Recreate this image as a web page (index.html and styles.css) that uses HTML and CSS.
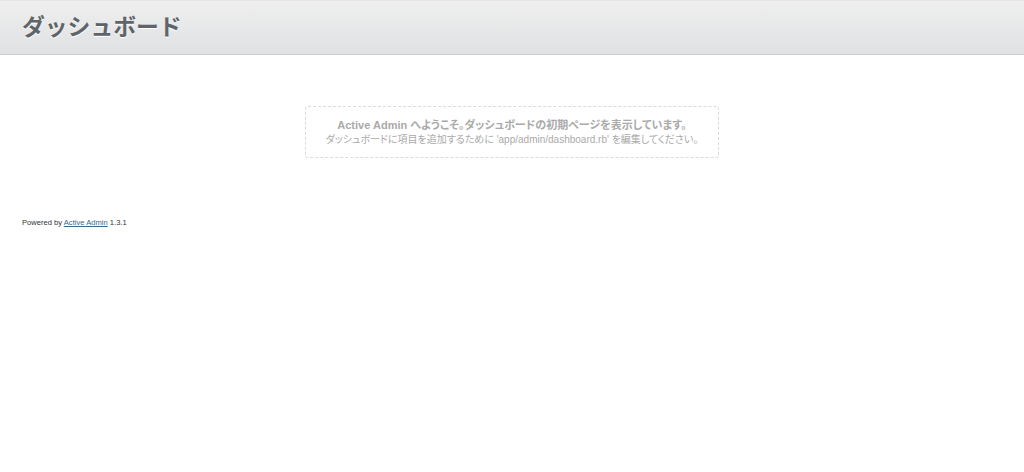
FILE: index.html
```html
<!DOCTYPE html>
<html lang="ja">
<head>
  <meta charset="UTF-8" />
  <title>ダッシュボード</title>
  <link rel="stylesheet" href="styles.css">
</head>
<body>
  <div id="title_bar">
    <h2>ダッシュボード</h2>
  </div>
  <div id="main_content">
    <div class="blank_slate_container">
      <span class="blank_slate">
        <span class="welcome">Active Admin へようこそ。ダッシュボードの初期ページを表示しています。</span>
        <small>ダッシュボードに項目を追加するために 'app/admin/dashboard.rb' を編集してください。</small>
      </span>
    </div>
  </div>
  <div id="footer">
    <p>Powered by <a href="#">Active Admin</a> 1.3.1</p>
  </div>
</body>
</html>
```

FILE: styles.css
```css
* {
  box-sizing: border-box;
}

body {
  margin: 0;
  background: #fff;
  font-family: "Liberation Sans", "Noto Sans CJK JP", sans-serif;
  font-size: 12px;
  color: #323537;
  font-feature-settings: "palt";
}

#title_bar {
  height: 55px;
  background: linear-gradient(180deg, #efefef 0%, #dfe1e2 100%);
  border-top: 1px solid #e4e4e4;
  border-bottom: 1px solid #cdcdcd;
  padding: 0 22px 4px;
  display: flex;
  align-items: center;
}

#title_bar h2 {
  margin: 0;
  font-size: 22.8px;
  font-weight: bold;
  color: #5e6469;
  text-shadow: 0 1px 0 #fff;
  font-feature-settings: normal;
}

#main_content {
  padding: 51px 22px 0;
}

.blank_slate_container {
  display: flex;
  justify-content: center;
}

.blank_slate {
  display: inline-block;
  width: 414px;
  height: 52px;
  border: 1px dashed #dadada;
  border-radius: 3px;
  text-align: center;
  color: #aaa;
  padding: 11px 0 0;
  white-space: nowrap;
}

.blank_slate .welcome {
  display: block;
  font-size: 11px;
  font-weight: bold;
  line-height: 15px;
}

.blank_slate small {
  display: block;
  font-size: 10px;
  line-height: 14px;
}

#footer {
  padding: 60px 22px 0;
}

#footer p {
  margin: 0;
  font-size: 7.6px;
  color: #323537;
}

#footer a {
  color: #38678b;
}
```
